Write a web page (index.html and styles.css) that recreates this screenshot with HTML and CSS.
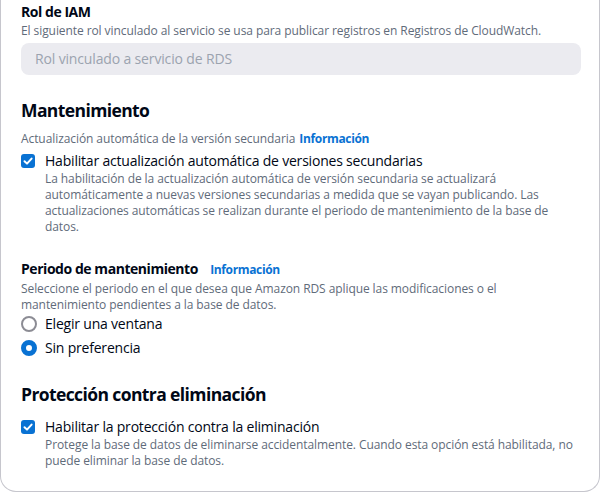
FILE: index.html
```html
<!DOCTYPE html>
<html lang="es">
<head>
<meta charset="utf-8">
<link rel="stylesheet" href="styles.css">
</head>
<body>
<div class="card">
  <div class="field">
    <div class="label">Rol de IAM</div>
    <div class="desc">El siguiente rol vinculado al servicio se usa para publicar registros en Registros de CloudWatch.</div>
    <div class="input">Rol vinculado a servicio de RDS</div>
  </div>

  <h2 class="heading">Mantenimiento</h2>
  <div class="desc sub">Actualización automática de la versión secundaria <a class="info">Información</a></div>
  <div class="check-row first">
    <span class="checkbox"><svg viewBox="0 0 14 14" width="14" height="14"><path d="M3.5 7.2 L6 9.6 L10.6 4.6" fill="none" stroke="#fff" stroke-width="2" stroke-linecap="round" stroke-linejoin="round"/></svg></span>
    <div class="check-text">
      <div class="check-label">Habilitar actualización automática de versiones secundarias</div>
      <div class="desc">La habilitación de la actualización automática de versión secundaria se actualizará automáticamente a nuevas versiones secundarias a medida que se vayan publicando. Las actualizaciones automáticas se realizan durante el periodo de mantenimiento de la base de datos.</div>
    </div>
  </div>

  <div class="field period">
    <div class="label">Periodo de mantenimiento <a class="info">Información</a></div>
    <div class="desc">Seleccione el periodo en el que desea que Amazon RDS aplique las modificaciones o el mantenimiento pendientes a la base de datos.</div>
    <div class="radio-row"><span class="radio"></span><span class="check-label">Elegir una ventana</span></div>
    <div class="radio-row"><span class="radio on"></span><span class="check-label">Sin preferencia</span></div>
  </div>

  <h2 class="heading prot">Protección contra eliminación</h2>
  <div class="check-row">
    <span class="checkbox"><svg viewBox="0 0 14 14" width="14" height="14"><path d="M3.5 7.2 L6 9.6 L10.6 4.6" fill="none" stroke="#fff" stroke-width="2" stroke-linecap="round" stroke-linejoin="round"/></svg></span>
    <div class="check-text">
      <div class="check-label">Habilitar la protección contra la eliminación</div>
      <div class="desc">Protege la base de datos de eliminarse accidentalmente. Cuando esta opción está habilitada, no puede eliminar la base de datos.</div>
    </div>
  </div>
</div>
</body>
</html>
```
FILE: styles.css
```css
* { box-sizing: border-box; }
body {
  margin: 0;
  font-family: "Open Sans", "Noto Sans", sans-serif;
  color: #000716;
  background: #fff;
}
.card {
  width: 600px;
  border: 1px solid #c6c6cd;
  border-top: none;
  border-radius: 0 0 16px 16px;
  padding: 2px 20px 22px 20px;
}
.label {
  font-size: 14px;
  line-height: 20px;
  font-weight: 700;
  letter-spacing: -0.45px;
}
.desc {
  font-size: 12px;
  line-height: 16px;
  color: #5f6b7a;
  letter-spacing: -0.08px;
}
.field > .desc { padding-top: 1px; margin-bottom: -1px; }
.input {
  margin-top: 5px;
  height: 32px;
  width: 560px;
  background: #ebebf0;
  border-radius: 8px;
  padding: 0 14px;
  font-size: 14px;
  line-height: 32px;
  color: #9ba3af;
  letter-spacing: -0.15px;
}
.heading {
  margin: 24px 0 0 0;
  font-size: 17.5px;
  line-height: 22px;
  font-weight: 700;
  letter-spacing: -0.6px;
}
.sub { margin-top: 10px; }
.info {
  color: #0972d3;
  font-weight: 700;
  font-size: 12px;
  margin-left: 1px;
  letter-spacing: -0.35px;
}
.label .info { margin-left: 9px; }
.check-row {
  display: flex;
  gap: 10px;
  margin-top: 4px;
}
.checkbox {
  flex: none;
  width: 14px;
  height: 14px;
  margin: 3px 0 0 0;
  background: #0972d3;
  border-radius: 3px;
  display: flex;
}
.check-label {
  font-size: 14px;
  line-height: 20px;
  letter-spacing: -0.2px;
}
.period { margin-top: 24px; }
.radio-row {
  display: flex;
  align-items: center;
  gap: 8px;
  margin-top: 2px;
}
.radio-row + .radio-row { margin-top: 4px; }
.radio {
  flex: none;
  width: 16px;
  height: 16px;
  border: 2px solid #8c8c94;
  border-radius: 50%;
}
.radio.on {
  border: 5px solid #0972d3;
}
.prot { margin-top: 25px; }
.prot + .check-row { margin-top: 12px; }
```
